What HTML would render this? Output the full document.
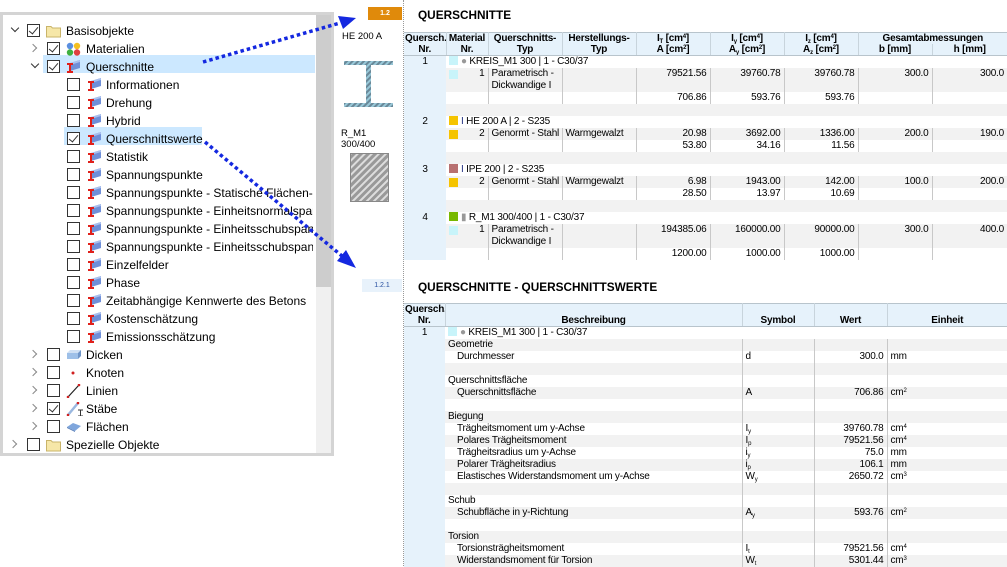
<!DOCTYPE html>
<html><head><meta charset="utf-8">
<style>
*{margin:0;padding:0;box-sizing:border-box}
body{width:1007px;height:566px;overflow:hidden;background:#fff;position:relative;font-family:"Liberation Sans",Arial,sans-serif;color:#000}
.tree{position:absolute;left:0;top:12px;width:334px;height:444px;border:3px solid #d4d4d4;background:#fff;overflow:hidden}
.sb{position:absolute;left:313px;top:0;width:15px;height:438px;background:#f0f0f0}
.sbt{position:absolute;left:313px;top:0;width:15px;height:272px;background:#cdcdcd}
.row{position:absolute;height:18px;line-height:18px;white-space:nowrap;font-family:"Liberation Sans",sans-serif;font-size:12px}
.cb{position:absolute;width:13px;height:13px;border:1px solid #333;background:#fff;top:2px}
.cb.c::after{content:"";position:absolute;left:3px;top:0px;width:4px;height:8px;border-right:1.4px solid #333;border-bottom:1.4px solid #333;transform:rotate(40deg)}
.chev{position:absolute;top:5px;width:6px;height:6px;border-right:1.5px solid #888;border-bottom:1.5px solid #888}
.chev.r{transform:rotate(-45deg)}
.chev.d{transform:rotate(45deg);top:3px;border-color:#333}
.ic{position:absolute;top:2px;width:15px;height:14px}
.tx{position:absolute;top:0}
.hl{position:absolute;background:#cce8ff}
.title{position:absolute;font-weight:bold;font-family:"Liberation Sans",sans-serif;font-size:11.8px;letter-spacing:0}
table{border-collapse:collapse;table-layout:fixed;position:absolute;font-size:10px;letter-spacing:-0.2px}
td,th{height:12px;line-height:12px;padding:0 3px;white-space:nowrap;overflow:hidden}
th{background:#e6f2fb;font-weight:bold;text-align:center;height:11px;line-height:11px;padding:0 1px;border-right:1px solid #c8d4dc}
thead tr:first-child th{border-top:1px solid #b8c4cc}
thead tr:last-child th{border-bottom:1px solid #b8c4cc}
td{border-right:1px solid #c8c8c8}
td.n{background:#e6f2fb;text-align:center;border-right:none}
tr.g td{background:#f2f2f2}
tr.g td.n{background:#e6f2fb}
.r{text-align:right}
td.nb{border-right:none}
.sq{display:inline-block;width:9px;height:9px;vertical-align:-1px;margin-right:3px}
.sqm{display:inline-block;width:9px;height:9px;vertical-align:-1px;position:absolute;left:3px;top:2px}
td.m{position:relative}
i.s{font-style:normal;font-size:6px;line-height:0;position:relative;top:2px}
i.p{font-style:normal;font-size:6px;line-height:0;position:relative;top:-3px}
</style></head><body>

<svg width="0" height="0" style="position:absolute">
<defs>
<symbol id="qs" viewBox="0 0 15 14">
<polygon points="4,3 14,0 14,8 4,11" fill="#6f8fd8"/>
<polygon points="4,3 14,0 14,2 4,5" fill="#a9c0ee"/>
<path d="M1,4H7M4,4V12M1,12H7" stroke="#e0201a" stroke-width="2" fill="none"/>
</symbol>
<symbol id="fold" viewBox="0 0 15 14">
<path d="M0.5,2.5H5L6.5,4H14.5V13H0.5Z" fill="#f6e7a8" stroke="#c9b46a"/>
</symbol>
</defs>
</svg>

<div class="tree">
<div class="sb"></div><div class="sbt"></div>
<div class="hl" style="left:40px;top:40px;width:272px;height:18px"></div>
<div class="hl" style="left:61px;top:112px;width:138px;height:18px"></div>

<div class="row" style="left:0;top:7px;width:310px"><div class="chev d" style="left:9px"></div><div class="cb c" style="left:24px"></div><svg class="ic" style="left:43px"><use href="#fold"/></svg><span class="tx" style="left:63px">Basisobjekte</span></div>
<div class="row" style="left:0;top:25px;width:310px"><div class="chev r" style="left:27px"></div><div class="cb c" style="left:44px"></div><svg class="ic" style="left:63px" viewBox="0 0 15 14"><circle cx="4" cy="4" r="3.2" fill="#5b8fe0"/><circle cx="11" cy="4" r="3.2" fill="#f4c020"/><circle cx="4" cy="10.5" r="3.2" fill="#40b040"/><circle cx="11" cy="10.5" r="3.2" fill="#e04040"/></svg><span class="tx" style="left:83px">Materialien</span></div>
<div class="row" style="left:0;top:43px;width:310px"><div class="chev d" style="left:29px"></div><div class="cb c" style="left:44px"></div><svg class="ic" style="left:63px"><use href="#qs"/></svg><span class="tx" style="left:83px">Querschnitte</span></div>

<div class="row" style="left:0;top:61px;width:310px"><div class="cb" style="left:64px"></div><svg class="ic" style="left:84px"><use href="#qs"/></svg><span class="tx" style="left:103px">Informationen</span></div>
<div class="row" style="left:0;top:79px;width:310px"><div class="cb" style="left:64px"></div><svg class="ic" style="left:84px"><use href="#qs"/></svg><span class="tx" style="left:103px">Drehung</span></div>
<div class="row" style="left:0;top:97px;width:310px"><div class="cb" style="left:64px"></div><svg class="ic" style="left:84px"><use href="#qs"/></svg><span class="tx" style="left:103px">Hybrid</span></div>
<div class="row" style="left:0;top:115px;width:310px"><div class="cb c" style="left:64px"></div><svg class="ic" style="left:84px"><use href="#qs"/></svg><span class="tx" style="left:103px">Querschnittswerte</span></div>
<div class="row" style="left:0;top:133px;width:310px"><div class="cb" style="left:64px"></div><svg class="ic" style="left:84px"><use href="#qs"/></svg><span class="tx" style="left:103px">Statistik</span></div>
<div class="row" style="left:0;top:151px;width:310px"><div class="cb" style="left:64px"></div><svg class="ic" style="left:84px"><use href="#qs"/></svg><span class="tx" style="left:103px">Spannungspunkte</span></div>
<div class="row" style="left:0;top:169px;width:310px;overflow:hidden"><div class="cb" style="left:64px"></div><svg class="ic" style="left:84px"><use href="#qs"/></svg><span class="tx" style="left:103px">Spannungspunkte - Statische Flächen- und</span></div>
<div class="row" style="left:0;top:187px;width:310px;overflow:hidden"><div class="cb" style="left:64px"></div><svg class="ic" style="left:84px"><use href="#qs"/></svg><span class="tx" style="left:103px">Spannungspunkte - Einheitsnormalspannung</span></div>
<div class="row" style="left:0;top:205px;width:310px;overflow:hidden"><div class="cb" style="left:64px"></div><svg class="ic" style="left:84px"><use href="#qs"/></svg><span class="tx" style="left:103px">Spannungspunkte - Einheitsschubspannung</span></div>
<div class="row" style="left:0;top:223px;width:310px;overflow:hidden"><div class="cb" style="left:64px"></div><svg class="ic" style="left:84px"><use href="#qs"/></svg><span class="tx" style="left:103px">Spannungspunkte - Einheitsschubspannung</span></div>
<div class="row" style="left:0;top:241px;width:310px"><div class="cb" style="left:64px"></div><svg class="ic" style="left:84px"><use href="#qs"/></svg><span class="tx" style="left:103px">Einzelfelder</span></div>
<div class="row" style="left:0;top:259px;width:310px"><div class="cb" style="left:64px"></div><svg class="ic" style="left:84px"><use href="#qs"/></svg><span class="tx" style="left:103px">Phase</span></div>
<div class="row" style="left:0;top:277px;width:310px"><div class="cb" style="left:64px"></div><svg class="ic" style="left:84px"><use href="#qs"/></svg><span class="tx" style="left:103px">Zeitabhängige Kennwerte des Betons</span></div>
<div class="row" style="left:0;top:295px;width:310px"><div class="cb" style="left:64px"></div><svg class="ic" style="left:84px"><use href="#qs"/></svg><span class="tx" style="left:103px">Kostenschätzung</span></div>
<div class="row" style="left:0;top:313px;width:310px"><div class="cb" style="left:64px"></div><svg class="ic" style="left:84px"><use href="#qs"/></svg><span class="tx" style="left:103px">Emissionsschätzung</span></div>

<div class="row" style="left:0;top:331px;width:310px"><div class="chev r" style="left:27px"></div><div class="cb" style="left:44px"></div><svg class="ic" style="left:63px" viewBox="0 0 15 14"><polygon points="1,5 4,2 15,2 12,5" fill="#cfe0f4"/><polygon points="1,5 12,5 12,11 1,11" fill="#9ec0e8"/><polygon points="12,5 15,2 15,8 12,11" fill="#6f95c8"/></svg><span class="tx" style="left:83px">Dicken</span></div>
<div class="row" style="left:0;top:349px;width:310px"><div class="chev r" style="left:27px"></div><div class="cb" style="left:44px"></div><svg class="ic" style="left:63px" viewBox="0 0 15 14"><circle cx="7" cy="7" r="1.5" fill="#d02020"/></svg><span class="tx" style="left:83px">Knoten</span></div>
<div class="row" style="left:0;top:367px;width:310px"><div class="chev r" style="left:27px"></div><div class="cb" style="left:44px"></div><svg class="ic" style="left:63px" viewBox="0 0 15 14"><line x1="2" y1="13" x2="13" y2="1" stroke="#222" stroke-width="1.2"/><circle cx="2" cy="13" r="1.3" fill="#d02020"/><circle cx="13" cy="1" r="1.3" fill="#d02020"/></svg><span class="tx" style="left:83px">Linien</span></div>
<div class="row" style="left:0;top:385px;width:310px"><div class="chev r" style="left:27px"></div><div class="cb c" style="left:44px"></div><svg class="ic" style="left:63px;width:18px" viewBox="0 0 18 14"><line x1="2" y1="13" x2="12" y2="1" stroke="#9ab8e0" stroke-width="2.5"/><circle cx="2" cy="13" r="1.3" fill="#d02020"/><circle cx="12" cy="1" r="1.3" fill="#d02020"/><path d="M12,8H17M14.5,8V14M12,14H17" stroke="#333" stroke-width="1" fill="none"/></svg><span class="tx" style="left:83px">Stäbe</span></div>
<div class="row" style="left:0;top:403px;width:310px"><div class="chev r" style="left:27px"></div><div class="cb" style="left:44px"></div><svg class="ic" style="left:63px" viewBox="0 0 15 14"><polygon points="1,7 7,3 15,6 9,11" fill="#7fa6dc"/><polygon points="1,7 9,11 9,12 1,8" fill="#5a7fb8"/></svg><span class="tx" style="left:83px">Flächen</span></div>
<div class="row" style="left:0;top:421px;width:310px"><div class="chev r" style="left:7px"></div><div class="cb" style="left:24px"></div><svg class="ic" style="left:43px"><use href="#fold"/></svg><span class="tx" style="left:63px">Spezielle Objekte</span></div>
</div>

<div style="position:absolute;left:403px;top:0;width:0;height:566px;border-left:1px dotted #999"></div>

<div style="position:absolute;left:368px;top:7px;width:34px;height:13px;background:#e08a0b;color:#fff;font-size:7px;font-weight:bold;text-align:center;line-height:13px">1.2</div>
<div class="title" style="left:418px;top:8px">QUERSCHNITTE</div>
<div style="position:absolute;left:362px;top:279px;width:40px;height:13px;background:#e8f2fb;color:#2850a0;font-size:7px;text-align:center;line-height:13px">1.2.1</div>
<div class="title" style="left:418px;top:280px">QUERSCHNITTE - QUERSCHNITTSWERTE</div>

<div style="position:absolute;left:342px;top:31px;font-size:9.5px">HE 200 A</div>
<svg style="position:absolute;left:343px;top:58px" width="52" height="52" viewBox="0 0 52 52">
<defs><pattern id="h1" width="4" height="4" patternUnits="userSpaceOnUse" patternTransform="rotate(45)"><rect width="4" height="4" fill="#98c8d8"/><rect width="2" height="4" fill="#6a8898"/></pattern></defs>
<rect x="1" y="3" width="49" height="4" fill="url(#h1)"/><rect x="1" y="45" width="49" height="4" fill="url(#h1)"/><rect x="23" y="7" width="5" height="38" fill="url(#h1)"/>
</svg>
<div style="position:absolute;left:341px;top:128px;font-size:9.5px;line-height:11px">R_M1<br>300/400</div>
<svg style="position:absolute;left:350px;top:153px" width="39" height="49" viewBox="0 0 39 49">
<defs><pattern id="h2" width="5" height="5" patternUnits="userSpaceOnUse" patternTransform="rotate(45)"><rect width="5" height="5" fill="#999"/><rect width="2" height="5" fill="#ddd"/></pattern></defs>
<rect x="0.5" y="0.5" width="38" height="48" fill="url(#h2)" stroke="#888"/>
</svg>

<table style="left:404px;top:32px;width:603px">
<colgroup><col style="width:42px"><col style="width:42px"><col style="width:74px"><col style="width:74px"><col style="width:74px"><col style="width:74px"><col style="width:74px"><col style="width:74px"><col style="width:75px"></colgroup>
<thead>
<tr><th>Quersch.</th><th>Material</th><th>Querschnitts-</th><th>Herstellungs-</th><th>I<i class="s">T</i> [cm<i class="p">4</i>]</th><th>I<i class="s">y</i> [cm<i class="p">4</i>]</th><th>I<i class="s">z</i> [cm<i class="p">4</i>]</th><th colspan="2" style="border-right:none">Gesamtabmessungen</th></tr>
<tr><th>Nr.</th><th>Nr.</th><th>Typ</th><th>Typ</th><th>A [cm<i class="p">2</i>]</th><th>A<i class="s">y</i> [cm<i class="p">2</i>]</th><th>A<i class="s">z</i> [cm<i class="p">2</i>]</th><th>b [mm]</th><th style="border-right:none">h [mm]</th></tr>
</thead>
<tbody>
<tr><td class="n">1</td><td colspan="8" class="nb"><span class="sq" style="background:#c8f4fa"></span><span style="color:#999">●</span> KREIS_M1 300 | 1 - C30/37</td></tr>
<tr class="g"><td class="n"></td><td class="r m" style="vertical-align:top"><span class="sqm" style="background:#c8f4fa"></span>1</td><td style="height:24px;line-height:12px">Parametrisch -<br>Dickwandige I</td><td></td><td class="r" style="vertical-align:top">79521.56</td><td class="r" style="vertical-align:top">39760.78</td><td class="r" style="vertical-align:top">39760.78</td><td class="r" style="vertical-align:top">300.0</td><td class="r nb" style="vertical-align:top">300.0</td></tr>
<tr><td class="n"></td><td></td><td></td><td></td><td class="r">706.86</td><td class="r">593.76</td><td class="r">593.76</td><td></td><td class="nb"></td></tr>
<tr class="g"><td class="n"></td><td colspan="8" class="nb"></td></tr>
<tr><td class="n">2</td><td colspan="8" class="nb"><span class="sq" style="background:#f5c400"></span><span style="color:#203080">I</span> HE 200 A | 2 - S235</td></tr>
<tr class="g"><td class="n"></td><td class="r m"><span class="sqm" style="background:#f5c400"></span>2</td><td>Genormt - Stahl</td><td>Warmgewalzt</td><td class="r">20.98</td><td class="r">3692.00</td><td class="r">1336.00</td><td class="r">200.0</td><td class="r nb">190.0</td></tr>
<tr><td class="n"></td><td></td><td></td><td></td><td class="r">53.80</td><td class="r">34.16</td><td class="r">11.56</td><td></td><td class="nb"></td></tr>
<tr class="g"><td class="n"></td><td colspan="8" class="nb"></td></tr>
<tr><td class="n">3</td><td colspan="8" class="nb"><span class="sq" style="background:#b87070"></span><span style="color:#203080">I</span> IPE 200 | 2 - S235</td></tr>
<tr class="g"><td class="n"></td><td class="r m"><span class="sqm" style="background:#f5c400"></span>2</td><td>Genormt - Stahl</td><td>Warmgewalzt</td><td class="r">6.98</td><td class="r">1943.00</td><td class="r">142.00</td><td class="r">100.0</td><td class="r nb">200.0</td></tr>
<tr><td class="n"></td><td></td><td></td><td></td><td class="r">28.50</td><td class="r">13.97</td><td class="r">10.69</td><td></td><td class="nb"></td></tr>
<tr class="g"><td class="n"></td><td colspan="8" class="nb"></td></tr>
<tr><td class="n">4</td><td colspan="8" class="nb"><span class="sq" style="background:#78b800"></span><span style="color:#999">▮</span> R_M1 300/400 | 1 - C30/37</td></tr>
<tr class="g"><td class="n"></td><td class="r m" style="vertical-align:top"><span class="sqm" style="background:#c8f4fa"></span>1</td><td style="height:24px">Parametrisch -<br>Dickwandige I</td><td></td><td class="r" style="vertical-align:top">194385.06</td><td class="r" style="vertical-align:top">160000.00</td><td class="r" style="vertical-align:top">90000.00</td><td class="r" style="vertical-align:top">300.0</td><td class="r nb" style="vertical-align:top">400.0</td></tr>
<tr><td class="n"></td><td></td><td></td><td></td><td class="r">1200.00</td><td class="r">1000.00</td><td class="r">1000.00</td><td></td><td class="nb"></td></tr>
</tbody></table>

<table style="left:404px;top:303px;width:603px">
<colgroup><col style="width:41px"><col style="width:297px"><col style="width:72px"><col style="width:73px"><col style="width:120px"></colgroup>
<thead>
<tr><th>Quersch.</th><th></th><th></th><th></th><th style="border-right:none"></th></tr>
<tr><th>Nr.</th><th>Beschreibung</th><th>Symbol</th><th>Wert</th><th style="border-right:none">Einheit</th></tr>
</thead>
<tbody>
<tr><td class="n">1</td><td colspan="4" class="nb"><span class="sq" style="background:#c8f4fa"></span><span style="color:#999">●</span> KREIS_M1 300 | 1 - C30/37</td></tr>
<tr class="g"><td class="n"></td><td>Geometrie</td><td></td><td></td><td class="nb"></td></tr>
<tr><td class="n"></td><td style="padding-left:12px">Durchmesser</td><td>d</td><td class="r">300.0</td><td class="nb">mm</td></tr>
<tr class="g"><td class="n"></td><td></td><td></td><td></td><td class="nb"></td></tr>
<tr><td class="n"></td><td>Querschnittsfläche</td><td></td><td></td><td class="nb"></td></tr>
<tr class="g"><td class="n"></td><td style="padding-left:12px">Querschnittsfläche</td><td>A</td><td class="r">706.86</td><td class="nb">cm<i class="p">2</i></td></tr>
<tr><td class="n"></td><td></td><td></td><td></td><td class="nb"></td></tr>
<tr class="g"><td class="n"></td><td>Biegung</td><td></td><td></td><td class="nb"></td></tr>
<tr><td class="n"></td><td style="padding-left:12px">Trägheitsmoment um y-Achse</td><td>I<i class="s">y</i></td><td class="r">39760.78</td><td class="nb">cm<i class="p">4</i></td></tr>
<tr class="g"><td class="n"></td><td style="padding-left:12px">Polares Trägheitsmoment</td><td>I<i class="s">p</i></td><td class="r">79521.56</td><td class="nb">cm<i class="p">4</i></td></tr>
<tr><td class="n"></td><td style="padding-left:12px">Trägheitsradius um y-Achse</td><td>i<i class="s">y</i></td><td class="r">75.0</td><td class="nb">mm</td></tr>
<tr class="g"><td class="n"></td><td style="padding-left:12px">Polarer Trägheitsradius</td><td>i<i class="s">p</i></td><td class="r">106.1</td><td class="nb">mm</td></tr>
<tr><td class="n"></td><td style="padding-left:12px">Elastisches Widerstandsmoment um y-Achse</td><td>W<i class="s">y</i></td><td class="r">2650.72</td><td class="nb">cm<i class="p">3</i></td></tr>
<tr class="g"><td class="n"></td><td></td><td></td><td></td><td class="nb"></td></tr>
<tr><td class="n"></td><td>Schub</td><td></td><td></td><td class="nb"></td></tr>
<tr class="g"><td class="n"></td><td style="padding-left:12px">Schubfläche in y-Richtung</td><td>A<i class="s">y</i></td><td class="r">593.76</td><td class="nb">cm<i class="p">2</i></td></tr>
<tr><td class="n"></td><td></td><td></td><td></td><td class="nb"></td></tr>
<tr class="g"><td class="n"></td><td>Torsion</td><td></td><td></td><td class="nb"></td></tr>
<tr><td class="n"></td><td style="padding-left:12px">Torsionsträgheitsmoment</td><td>I<i class="s">t</i></td><td class="r">79521.56</td><td class="nb">cm<i class="p">4</i></td></tr>
<tr class="g"><td class="n"></td><td style="padding-left:12px">Widerstandsmoment für Torsion</td><td>W<i class="s">t</i></td><td class="r">5301.44</td><td class="nb">cm<i class="p">3</i></td></tr>
</tbody></table>

<svg style="position:absolute;left:0;top:0" width="1007" height="566">
<line x1="203" y1="62" x2="340" y2="23" stroke="#1428e0" stroke-width="3.5" stroke-dasharray="3.5 3"/>
<polygon points="356,18 338,16 343,29" fill="#1428e0"/>
<line x1="205" y1="142" x2="342" y2="256" stroke="#1428e0" stroke-width="3.5" stroke-dasharray="3.5 3"/>
<polygon points="356,268 337,261 346,250" fill="#1428e0"/>
</svg>
</body></html>
